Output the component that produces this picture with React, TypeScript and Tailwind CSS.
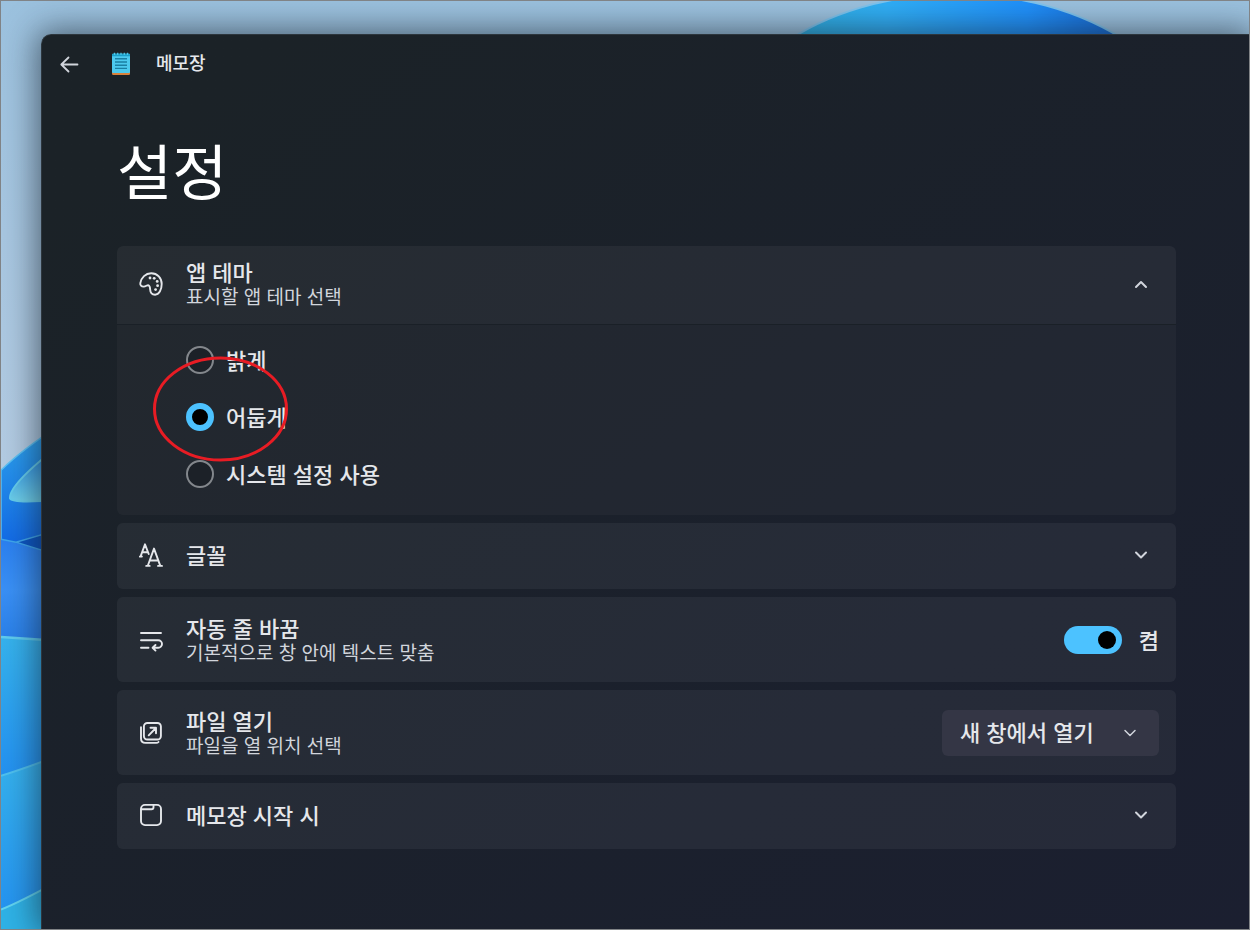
import { useState } from 'react';
import type { ReactNode } from 'react';

type Theme = 'light' | 'dark' | 'system';

const THEMES: { value: Theme; label: string }[] = [
  { value: 'light', label: '밝게' },
  { value: 'dark', label: '어둡게' },
  { value: 'system', label: '시스템 설정 사용' },
];

const Icon = ({ children }: { children: ReactNode }) => (
  <svg
    className="h-6 w-6 shrink-0 text-gray-200"
    viewBox="0 0 24 24"
    fill="none"
    stroke="currentColor"
    strokeWidth={1.9}
    strokeLinecap="round"
    strokeLinejoin="round"
    aria-hidden="true"
  >
    {children}
  </svg>
);

const PaletteIcon = () => (
  <Icon>
    <path d="M1.3 11.2C2.2 5.6 6.600 1.300 12.200 1.300c6.200 0 10.500 4.600 10.500 10.700 0 6-2.700 10.700-6.600 10.700-3.300 0-4.800-2.200-4.900-4.900-.1-2.200-.2-3.900-1.600-4.500-1.500-.6-2.500 1.200-4.900 1.300-2.400 0-3.700-1.500-3.400-3.400Z" />
    <g fill="currentColor" stroke="none">
      <circle cx="11" cy="6" r="1.4" />
      <circle cx="15.2" cy="6.3" r="1.4" />
      <circle cx="18.2" cy="9.4" r="1.4" />
      <circle cx="18.6" cy="13.7" r="1.4" />
      <circle cx="16.6" cy="17.6" r="1.4" />
    </g>
  </Icon>
);

const FontIcon = () => (
  <Icon>
    <path d="M1.6 13.3 6 1.3 9.700 11M.9 13.500h2M3.300 9.200h5" />
    <path d="M8.8 22.800 15 5.600l6.300 17.200M7.200 22.900h3.500M19 22.900h4M11 17.500h8" />
  </Icon>
);

const WrapIcon = () => (
  <Icon>
    <path d="M2 5h20M2 12.200h17.200a3.800 3.800 0 0 1 0 7.600h-5M2 19.800h7.500M16.500 17l-2.900 2.800 2.900 2.800" />
  </Icon>
);

const OpenFileIcon = () => (
  <Icon>
    <rect x="4.9" y="2" width="17" height="16.5" rx="3.5" />
    <path d="M2 6.200v11.300c0 2.700 1.700 4.400 4.400 4.400h10.800c1 0 1.800-.3 2.300-.9M9.700 14.300l7.200-7.300M11.500 6.800h5.500v5.500" />
  </Icon>
);

const StartupIcon = () => (
  <Icon>
    <rect x="2" y="1.9" width="20" height="20.2" rx="4" />
    <path d="M2.500 6.300h10c1.300 0 2-.7 2-2V2.200" />
  </Icon>
);

const Chevron = ({ up = false, thin = false }: { up?: boolean; thin?: boolean }) => (
  <svg
    className="h-[14px] w-[14px] shrink-0 text-gray-300"
    viewBox="0 0 14 14"
    fill="none"
    stroke="currentColor"
    strokeWidth={thin ? 1.5 : 2}
    strokeLinecap="round"
    strokeLinejoin="round"
    aria-hidden="true"
  >
    <path d={up ? 'M2 10l5-5 5 5' : 'M2 4.5l5 5 5-5'} />
  </svg>
);

const NotepadLogo = () => (
  <svg className="h-6 w-5 shrink-0" viewBox="0 0 20 24" aria-hidden="true">
    <rect x="1" y="3" width="18" height="20" rx="1.2" fill="#d9823c" />
    <rect x="1" y="1.8" width="18" height="19.2" rx="1" fill="#4cc9ee" />
    <path d="M1 2.800a1 1 0 0 1 1-1h16a1 1 0 0 1 1 1v1.500H1Z" fill="#1b9fc9" />
    <path d="M3.500.8v2.200M6.700.8v2.200M10 .8v2.200M13.300.8v2.200M16.500.8v2.200" stroke="#4cc6e8" strokeWidth="1.3" />
    <path d="M4 6.800h12M4 10h12M4 13.200h12M4 16.400h12" stroke="#1a7fa3" strokeWidth="1.4" />
  </svg>
);

// Desktop bloom that shows around the window
const Wallpaper = () => (
  <svg
    className="absolute inset-0 h-full w-full"
    viewBox="0 0 1250 930"
    preserveAspectRatio="xMinYMin slice"
    aria-hidden="true"
  >
    <defs>
      <linearGradient id="sky" x1="0" y1="0" x2="0" y2="1">
        <stop offset="0" stopColor="#9bc1de" />
        <stop offset="0.5" stopColor="#b3cbe2" />
      </linearGradient>
      <linearGradient id="arc" x1="0" y1="0" x2="1" y2="0">
        <stop offset="0" stopColor="#2fb0e0" />
        <stop offset="0.3" stopColor="#30aef6" />
        <stop offset="0.7" stopColor="#2090fa" />
        <stop offset="1" stopColor="#1662cc" />
      </linearGradient>
      <linearGradient id="petalTop" x1="0" y1="0" x2="0" y2="1">
        <stop offset="0" stopColor="#2fa6ee" />
        <stop offset="1" stopColor="#0f62e4" />
      </linearGradient>
      <linearGradient id="petalInner" x1="0" y1="0" x2="0" y2="1">
        <stop offset="0" stopColor="#1c7ee0" />
        <stop offset="1" stopColor="#6fd0ea" />
      </linearGradient>
      <linearGradient id="petalMid" x1="0" y1="0" x2="0" y2="1">
        <stop offset="0" stopColor="#2b80ef" />
        <stop offset="0.5" stopColor="#3a90f5" />
        <stop offset="1" stopColor="#2a80e8" />
      </linearGradient>
      <linearGradient id="petalLow" x1="0" y1="0" x2="0" y2="1">
        <stop offset="0" stopColor="#36b2ec" />
        <stop offset="1" stopColor="#2390f0" />
      </linearGradient>
    </defs>
    <rect width="1250" height="930" fill="url(#sky)" />
    <path d="M782 44C872-20 1028-28 1133 44Z" fill="url(#arc)" stroke="#7fc4ee" strokeWidth="2" />
    <path d="M0 470Q20 450 60 424V560H0Z" fill="url(#petalTop)" stroke="#5cc0f2" strokeWidth="1.5" />
    <path d="M60 444Q8 484 9 498Q12 504 60 499Z" fill="url(#petalInner)" stroke="#66cdec" strokeWidth="2" />
    <path d="M0 539L15 542L60 556V640H0Z" fill="url(#petalMid)" />
    <path d="M15 542L60 529V556Z" fill="#0b55c4" />
    <path d="M0 539L15 542L60 529M15 542L60 556" fill="none" stroke="#3fa6ec" strokeWidth="1.5" />
    <path d="M0 637L60 641V780H0Z" fill="url(#petalLow)" />
    <path d="M0 637L60 641" stroke="#5fcbee" strokeWidth="2.5" />
    <path d="M0 776Q20 770 60 755V930H0Z" fill="url(#petalLow)" />
    <path d="M0 776Q20 770 60 755" fill="none" stroke="#4fc0ee" strokeWidth="2" />
    <path d="M0 910Q20 902 60 880V930H0Z" fill="#2fb2e6" />
    <path d="M0 910Q20 902 60 880" fill="none" stroke="#62d4f0" strokeWidth="2" />
  </svg>
);

const RowText = ({ title, description }: { title: string; description?: string }) => (
  <span className="flex min-w-0 flex-1 flex-col pt-1 text-left">
    <span className="text-[22px] leading-6 font-medium text-gray-200">{title}</span>
    {description && <span className="text-[19px] leading-6 text-gray-300">{description}</span>}
  </span>
);

export default function App() {
  const [theme, setTheme] = useState<Theme>('dark');
  const [themeOpen, setThemeOpen] = useState(true);
  const [wordWrap, setWordWrap] = useState(true);

  return (
    <div className="relative flex min-h-screen overflow-hidden border border-[#808386] pt-[33px] pl-10 font-['Liberation_Sans','Noto_Sans_CJK_KR',sans-serif]">
      <Wallpaper />

      <div className="relative flex-1 rounded-tl-[10px] border-t border-l border-[#2d363d] bg-linear-to-br from-[#1b2227] from-10% to-[#1b1f30] shadow-[0_0_32px_4px_rgba(20,30,40,0.6)]">
        <header className="flex h-[58px] items-center pl-[17px]">
          <button type="button" aria-label="뒤로" className="flex h-6 w-5 items-center text-gray-300">
            <svg className="h-5 w-5" viewBox="0 0 20 20" fill="none" stroke="currentColor" strokeWidth="1.8" strokeLinecap="round" strokeLinejoin="round">
              <path d="M18.500 10.500H2.500M9.500 3.500 2.300 10.500 9.500 17.500" />
            </svg>
          </button>
          <div className="ml-8 flex items-center gap-[25px]">
            <NotepadLogo />
            <span className="text-lg leading-6 font-medium text-gray-200">메모장</span>
          </div>
        </header>

        <main className="pt-[42px] pr-[73px] pb-20 pl-[75px]">
          <h1 className="text-[60px] leading-20 text-white">설정</h1>

          <div className="mt-[31px] flex flex-col gap-2">
            {/* App theme */}
            <section className="relative rounded-md bg-white/3">
              <button
                type="button"
                aria-expanded={themeOpen}
                onClick={() => setThemeOpen(!themeOpen)}
                className="flex h-[79px] w-full items-center gap-[23px] rounded-t-md border-b border-[#1a2027] bg-white/2 pr-7 pb-[3px] pl-[22px]"
              >
                <PaletteIcon />
                <RowText title="앱 테마" description="표시할 앱 테마 선택" />
                <Chevron up={themeOpen} />
              </button>

              {themeOpen && (
                <div role="radiogroup" aria-label="앱 테마" className="flex flex-col gap-[29px] pt-[21px] pb-[27px] pl-[69px]">
                  {THEMES.map((item) => (
                    <label key={item.value} className="flex h-7 items-center gap-3 text-[22px] leading-6 font-medium text-gray-200">
                      <input
                        type="radio"
                        name="theme"
                        value={item.value}
                        checked={theme === item.value}
                        onChange={() => setTheme(item.value)}
                        className="h-7 w-7 shrink-0 appearance-none rounded-full border-2 border-[#83878c] bg-[#1c2128] checked:border-[6px] checked:border-[#4cc2ff] checked:bg-black"
                      />
                      <span className="pt-1">{item.label}</span>
                    </label>
                  ))}
                </div>
              )}

              {/* Hand-drawn marker round the dark option */}
              <svg
                className="pointer-events-none absolute top-[110px] left-9 h-[106px] w-[136px]"
                viewBox="0 0 136 106"
                aria-hidden="true"
              >
                <ellipse cx="67.5" cy="53" rx="66" ry="51" fill="none" stroke="#e81c24" strokeWidth="3" />
              </svg>
            </section>

            {/* Font */}
            <button type="button" aria-expanded="false" className="flex h-[66px] items-center gap-[23px] rounded-md bg-white/5 pr-7 pb-[3px] pl-[22px]">
              <FontIcon />
              <RowText title="글꼴" />
              <Chevron />
            </button>

            {/* Word wrap */}
            <section className="flex h-[85px] items-center gap-[23px] rounded-md bg-white/5 pr-[17px] pl-[22px]">
              <WrapIcon />
              <RowText title="자동 줄 바꿈" description="기본적으로 창 안에 텍스트 맞춤" />
              <label className="flex items-center gap-[17px] text-[22px] leading-6 font-medium text-gray-200">
                <input
                  type="checkbox"
                  role="switch"
                  aria-label="자동 줄 바꿈"
                  checked={wordWrap}
                  onChange={(e) => setWordWrap(e.target.checked)}
                  className="flex h-7 w-[58px] appearance-none items-center rounded-full bg-gray-600 px-[6px] before:h-[18px] before:w-[18px] before:rounded-full before:bg-black checked:justify-end checked:bg-[#4cc2ff]"
                />
                <span className="pt-1">{wordWrap ? '켬' : '끔'}</span>
              </label>
            </section>

            {/* Opening files */}
            <section className="flex h-[85px] items-center gap-[23px] rounded-md bg-white/5 pr-[17px] pl-[22px]">
              <OpenFileIcon />
              <RowText title="파일 열기" description="파일을 열 위치 선택" />
              <div className="relative">
                <select
                  aria-label="파일 열기"
                  className="h-[46px] w-[217px] appearance-none rounded-md bg-[#343645] pt-[2px] pr-10 pl-[18px] text-[22px] font-medium text-gray-200"
                >
                  <option>새 창에서 열기</option>
                  <option>새 탭에서 열기</option>
                </select>
                <span className="pointer-events-none absolute inset-y-0 right-[22px] flex items-center">
                  <Chevron thin />
                </span>
              </div>
            </section>

            {/* Startup */}
            <button type="button" aria-expanded="false" className="flex h-[66px] items-center gap-[23px] rounded-md bg-white/5 pr-7 pb-[3px] pl-[22px]">
              <StartupIcon />
              <RowText title="메모장 시작 시" />
              <Chevron />
            </button>
          </div>
        </main>
      </div>
    </div>
  );
}
